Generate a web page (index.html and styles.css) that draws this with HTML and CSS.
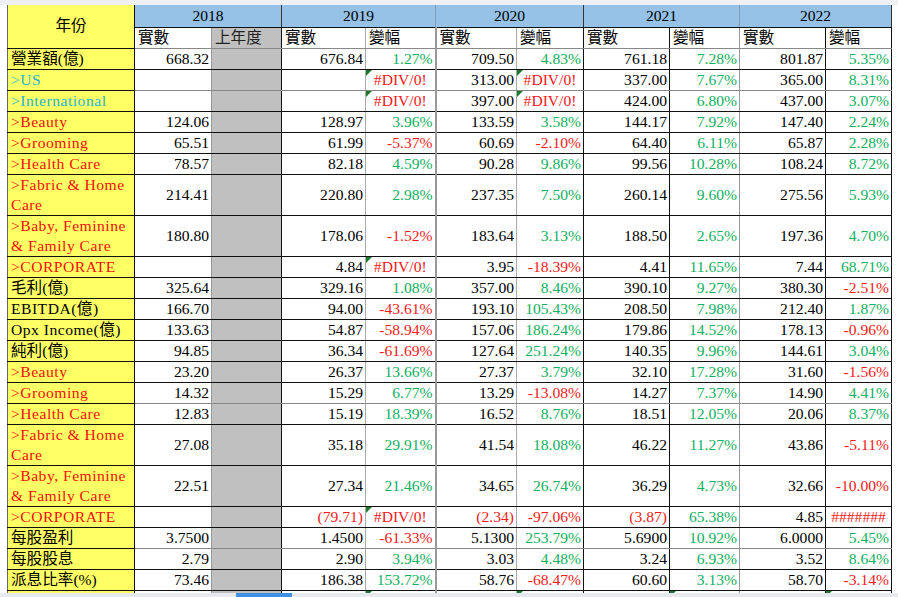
FILE: index.html
```html
<!DOCTYPE html>
<html lang="zh-Hant">
<head>
<meta charset="utf-8">
<title>財務資料</title>
<link rel="stylesheet" href="styles.css">
</head>
<body>
<div class="topstrip"></div>
<table class="sheet">
<colgroup>
<col class="c-label"><col class="c-a"><col class="c-prev"><col class="c-a19"><col class="c-p19"><col class="c-a20"><col class="c-p20"><col class="c-a21"><col class="c-p21"><col class="c-a22"><col class="c-p22">
</colgroup>
<thead>
<tr class="hy">
<th class="year-label" rowspan="2">年份</th>
<th class="yr b-dark" colspan="2">2018</th>
<th class="yr b-gray" colspan="2">2019</th>
<th class="yr b-dark" colspan="2">2020</th>
<th class="yr b-gray" colspan="2">2021</th>
<th class="yr b-dark" colspan="2">2022</th>
</tr>
<tr class="hs">
<th>實數</th><th class="prev">上年度</th><th>實數</th><th>變幅</th><th>實數</th><th>變幅</th><th>實數</th><th>變幅</th><th>實數</th><th>變幅</th>
</tr>
</thead>
<tbody>
<tr><td class="l">營業額(億)</td><td>668.32</td><td></td><td>676.84</td><td class="g">1.27%</td><td>709.50</td><td class="g">4.83%</td><td>761.18</td><td class="g">7.28%</td><td>801.87</td><td class="g">5.35%</td></tr>
<tr class="hg"><td class="l lat cy">&gt;US</td><td></td><td></td><td></td><td class="e t">#DIV/0!</td><td>313.00</td><td class="e t">#DIV/0!</td><td>337.00</td><td class="g">7.67%</td><td>365.00</td><td class="g">8.31%</td></tr>
<tr><td class="l lat cy">&gt;International</td><td></td><td></td><td></td><td class="e t">#DIV/0!</td><td>397.00</td><td class="e t">#DIV/0!</td><td>424.00</td><td class="g">6.80%</td><td>437.00</td><td class="g">3.07%</td></tr>
<tr><td class="l lat rd">&gt;Beauty</td><td>124.06</td><td></td><td>128.97</td><td class="g">3.96%</td><td>133.59</td><td class="g">3.58%</td><td>144.17</td><td class="g">7.92%</td><td>147.40</td><td class="g">2.24%</td></tr>
<tr><td class="l lat rd">&gt;Grooming</td><td>65.51</td><td></td><td>61.99</td><td class="r">-5.37%</td><td>60.69</td><td class="r">-2.10%</td><td>64.40</td><td class="g">6.11%</td><td>65.87</td><td class="g">2.28%</td></tr>
<tr><td class="l lat rd">&gt;Health Care</td><td>78.57</td><td></td><td>82.18</td><td class="g">4.59%</td><td>90.28</td><td class="g">9.86%</td><td>99.56</td><td class="g">10.28%</td><td>108.24</td><td class="g">8.72%</td></tr>
<tr class="dbl"><td class="l lat rd">&gt;Fabric &amp; Home<br>Care</td><td>214.41</td><td></td><td>220.80</td><td class="g">2.98%</td><td>237.35</td><td class="g">7.50%</td><td>260.14</td><td class="g">9.60%</td><td>275.56</td><td class="g">5.93%</td></tr>
<tr class="dbl"><td class="l lat rd">&gt;Baby, Feminine<br>&amp; Family Care</td><td>180.80</td><td></td><td>178.06</td><td class="r">-1.52%</td><td>183.64</td><td class="g">3.13%</td><td>188.50</td><td class="g">2.65%</td><td>197.36</td><td class="g">4.70%</td></tr>
<tr><td class="l lat rd">&gt;CORPORATE</td><td></td><td></td><td>4.84</td><td class="e t">#DIV/0!</td><td>3.95</td><td class="r">-18.39%</td><td>4.41</td><td class="g">11.65%</td><td>7.44</td><td class="g">68.71%</td></tr>
<tr><td class="l">毛利(億)</td><td>325.64</td><td></td><td>329.16</td><td class="g">1.08%</td><td>357.00</td><td class="g">8.46%</td><td>390.10</td><td class="g">9.27%</td><td>380.30</td><td class="r">-2.51%</td></tr>
<tr><td class="l lat">EBITDA(億)</td><td>166.70</td><td></td><td>94.00</td><td class="r">-43.61%</td><td>193.10</td><td class="g">105.43%</td><td>208.50</td><td class="g">7.98%</td><td>212.40</td><td class="g">1.87%</td></tr>
<tr><td class="l lat">Opx Income(億)</td><td>133.63</td><td></td><td>54.87</td><td class="r">-58.94%</td><td>157.06</td><td class="g">186.24%</td><td>179.86</td><td class="g">14.52%</td><td>178.13</td><td class="r">-0.96%</td></tr>
<tr><td class="l">純利(億)</td><td>94.85</td><td></td><td>36.34</td><td class="r">-61.69%</td><td>127.64</td><td class="g">251.24%</td><td>140.35</td><td class="g">9.96%</td><td>144.61</td><td class="g">3.04%</td></tr>
<tr><td class="l lat rd">&gt;Beauty</td><td>23.20</td><td></td><td>26.37</td><td class="g">13.66%</td><td>27.37</td><td class="g">3.79%</td><td>32.10</td><td class="g">17.28%</td><td>31.60</td><td class="r">-1.56%</td></tr>
<tr class="hg"><td class="l lat rd">&gt;Grooming</td><td>14.32</td><td></td><td>15.29</td><td class="g">6.77%</td><td>13.29</td><td class="r">-13.08%</td><td>14.27</td><td class="g">7.37%</td><td>14.90</td><td class="g">4.41%</td></tr>
<tr><td class="l lat rd">&gt;Health Care</td><td>12.83</td><td></td><td>15.19</td><td class="g">18.39%</td><td>16.52</td><td class="g">8.76%</td><td>18.51</td><td class="g">12.05%</td><td>20.06</td><td class="g">8.37%</td></tr>
<tr class="dbl"><td class="l lat rd">&gt;Fabric &amp; Home<br>Care</td><td>27.08</td><td></td><td>35.18</td><td class="g">29.91%</td><td>41.54</td><td class="g">18.08%</td><td>46.22</td><td class="g">11.27%</td><td>43.86</td><td class="r">-5.11%</td></tr>
<tr class="dbl"><td class="l lat rd">&gt;Baby, Feminine<br>&amp; Family Care</td><td>22.51</td><td></td><td>27.34</td><td class="g">21.46%</td><td>34.65</td><td class="g">26.74%</td><td>36.29</td><td class="g">4.73%</td><td>32.66</td><td class="r">-10.00%</td></tr>
<tr><td class="l lat rd">&gt;CORPORATE</td><td></td><td></td><td class="r">(79.71)</td><td class="e t">#DIV/0!</td><td class="r">(2.34)</td><td class="r">-97.06%</td><td class="r">(3.87)</td><td class="g">65.38%</td><td>4.85</td><td class="e">#######</td></tr>
<tr class="hg"><td class="l">每股盈利</td><td>3.7500</td><td></td><td>1.4500</td><td class="r">-61.33%</td><td>5.1300</td><td class="g">253.79%</td><td>5.6900</td><td class="g">10.92%</td><td>6.0000</td><td class="g">5.45%</td></tr>
<tr><td class="l">每股股息</td><td>2.79</td><td></td><td>2.90</td><td class="g">3.94%</td><td>3.03</td><td class="g">4.48%</td><td>3.24</td><td class="g">6.93%</td><td>3.52</td><td class="g">8.64%</td></tr>
<tr><td class="l">派息比率(%)</td><td>73.46</td><td></td><td>186.38</td><td class="g">153.72%</td><td>58.76</td><td class="r">-68.47%</td><td>60.60</td><td class="g">3.13%</td><td>58.70</td><td class="r">-3.14%</td></tr>
<tr><td class="l"></td><td></td><td></td><td></td><td class="t"></td><td></td><td class="t"></td><td></td><td class="t"></td><td></td><td class="t"></td></tr>
</tbody>
</table>
<div class="hscroll"><div class="thumb"></div></div>
</body>
</html>
```
FILE: styles.css
```css
html, body {
  margin: 0;
  padding: 0;
  background: #ffffff;
  overflow: hidden;
  height: 597px;
}
body {
  font-family: "Liberation Serif", "Noto Sans CJK TC", serif;
  font-size: 15.6px;
  color: #000;
}
.topstrip {
  height: 5px;
  background: #eef0f4;
}
.sheet {
  margin-left: 7px;
  border-collapse: collapse;
  table-layout: fixed;
  width: 885px;
}
.c-label { width: 127px; }
.c-a { width: 77px; }
.c-prev { width: 70px; }
.c-a19 { width: 84px; }
.c-p19 { width: 70px; }
.c-a20 { width: 81px; }
.c-p20 { width: 67px; }
.c-a21 { width: 86px; }
.c-p21 { width: 70px; }
.c-a22 { width: 86px; }
.c-p22 { width: 66px; }

.sheet th, .sheet td {
  padding: 0 2px;
  font-weight: normal;
  line-height: 20px;
  white-space: nowrap;
  overflow: hidden;
  border-bottom: 1px solid #111;
}
.sheet tr { height: 21px; }
.sheet tr.dbl { height: 41px; }
.sheet tr.hy { height: 22px; }
.sheet tr.hs { height: 20px; }

.year-label {
  background: #ffff66;
  border-left: 1px solid #666;
  border-right: 1px solid #111;
  text-align: center;
  vertical-align: middle;
}
.yr {
  background: #95c2e6;
  text-align: center;
  vertical-align: middle;
}
.yr.b-dark { border-right: 1px solid #333; }
.yr.b-gray { border-right: 1px solid #8a9cb0; }
.hs th {
  text-align: left;
  background: #fff;
  border-bottom: 1px solid #888;
  padding-left: 3px;
}
.hs th.prev { background: #c0c0c0; color: #222; }
.hs th:nth-child(1) { border-right: 1px solid #999; }
.hs th:nth-child(2) { border-right: 1px solid #111; }
.hs th:nth-child(3) { border-right: 1px solid #aaa; }
.hs th:nth-child(4) { border-right: 2px solid #999; }
.hs th:nth-child(5) { border-right: 1px solid #aaa; }
.hs th:nth-child(6) { border-right: 1px solid #111; }
.hs th:nth-child(7) { border-right: 1px solid #111; }
.hs th:nth-child(8) { border-right: 1px solid #999; }
.hs th:nth-child(9) { border-right: 1px solid #111; }
.hs th:nth-child(10) { border-right: 1px solid #111; }

.sheet tbody td {
  text-align: right;
  vertical-align: middle;
}
.sheet tbody td:nth-child(1) { border-left: 1px solid #666; border-right: 1px solid #111; }
.sheet tbody td:nth-child(2) { border-right: 1px solid #999; }
.sheet tbody td:nth-child(3) { border-right: 1px solid #111; background: #c0c0c0; }
.sheet tbody td:nth-child(4) { border-right: 1px solid #aaa; }
.sheet tbody td:nth-child(5) { border-right: 2px solid #999; }
.sheet tbody td:nth-child(6) { border-right: 1px solid #aaa; }
.sheet tbody td:nth-child(7) { border-right: 1px solid #111; }
.sheet tbody td:nth-child(8) { border-right: 1px solid #111; }
.sheet tbody td:nth-child(9) { border-right: 1px solid #999; }
.sheet tbody td:nth-child(10) { border-right: 1px solid #111; }
.sheet tbody td:nth-child(11) { border-right: 1px solid #111; }
.sheet tbody tr.hg td { border-bottom-color: #888; }
.sheet tbody tr.hg td.l { border-bottom-color: #111; }

.sheet td.l {
  text-align: left;
  background: #ffff66;
  padding-left: 3px;
  color: #000;
}
.sheet td.l.lat { letter-spacing: 0.5px; }
.sheet tr.dbl td.l { line-height: 20px; }
.sheet td.l.cy { color: #1fb4d8; }
.sheet td.l.rd { color: #f01010; }
.sheet td.g { color: #10b060; }
.sheet td.r { color: #f51a1a; }
.sheet td.e { color: #f51a1a; text-align: center; }
.sheet td.t { position: relative; }
.sheet td.t::before {
  content: "";
  position: absolute;
  top: 0;
  left: 0;
  border-top: 6px solid #1d7a2c;
  border-right: 6px solid transparent;
}

.hscroll {
  position: fixed;
  left: 0;
  right: 0;
  bottom: 0;
  height: 4px;
  background: #e6e9ee;
}
.hscroll .thumb {
  position: absolute;
  left: 236px;
  width: 56px;
  top: 0;
  bottom: 0;
  background: #3f8fe3;
}
```
